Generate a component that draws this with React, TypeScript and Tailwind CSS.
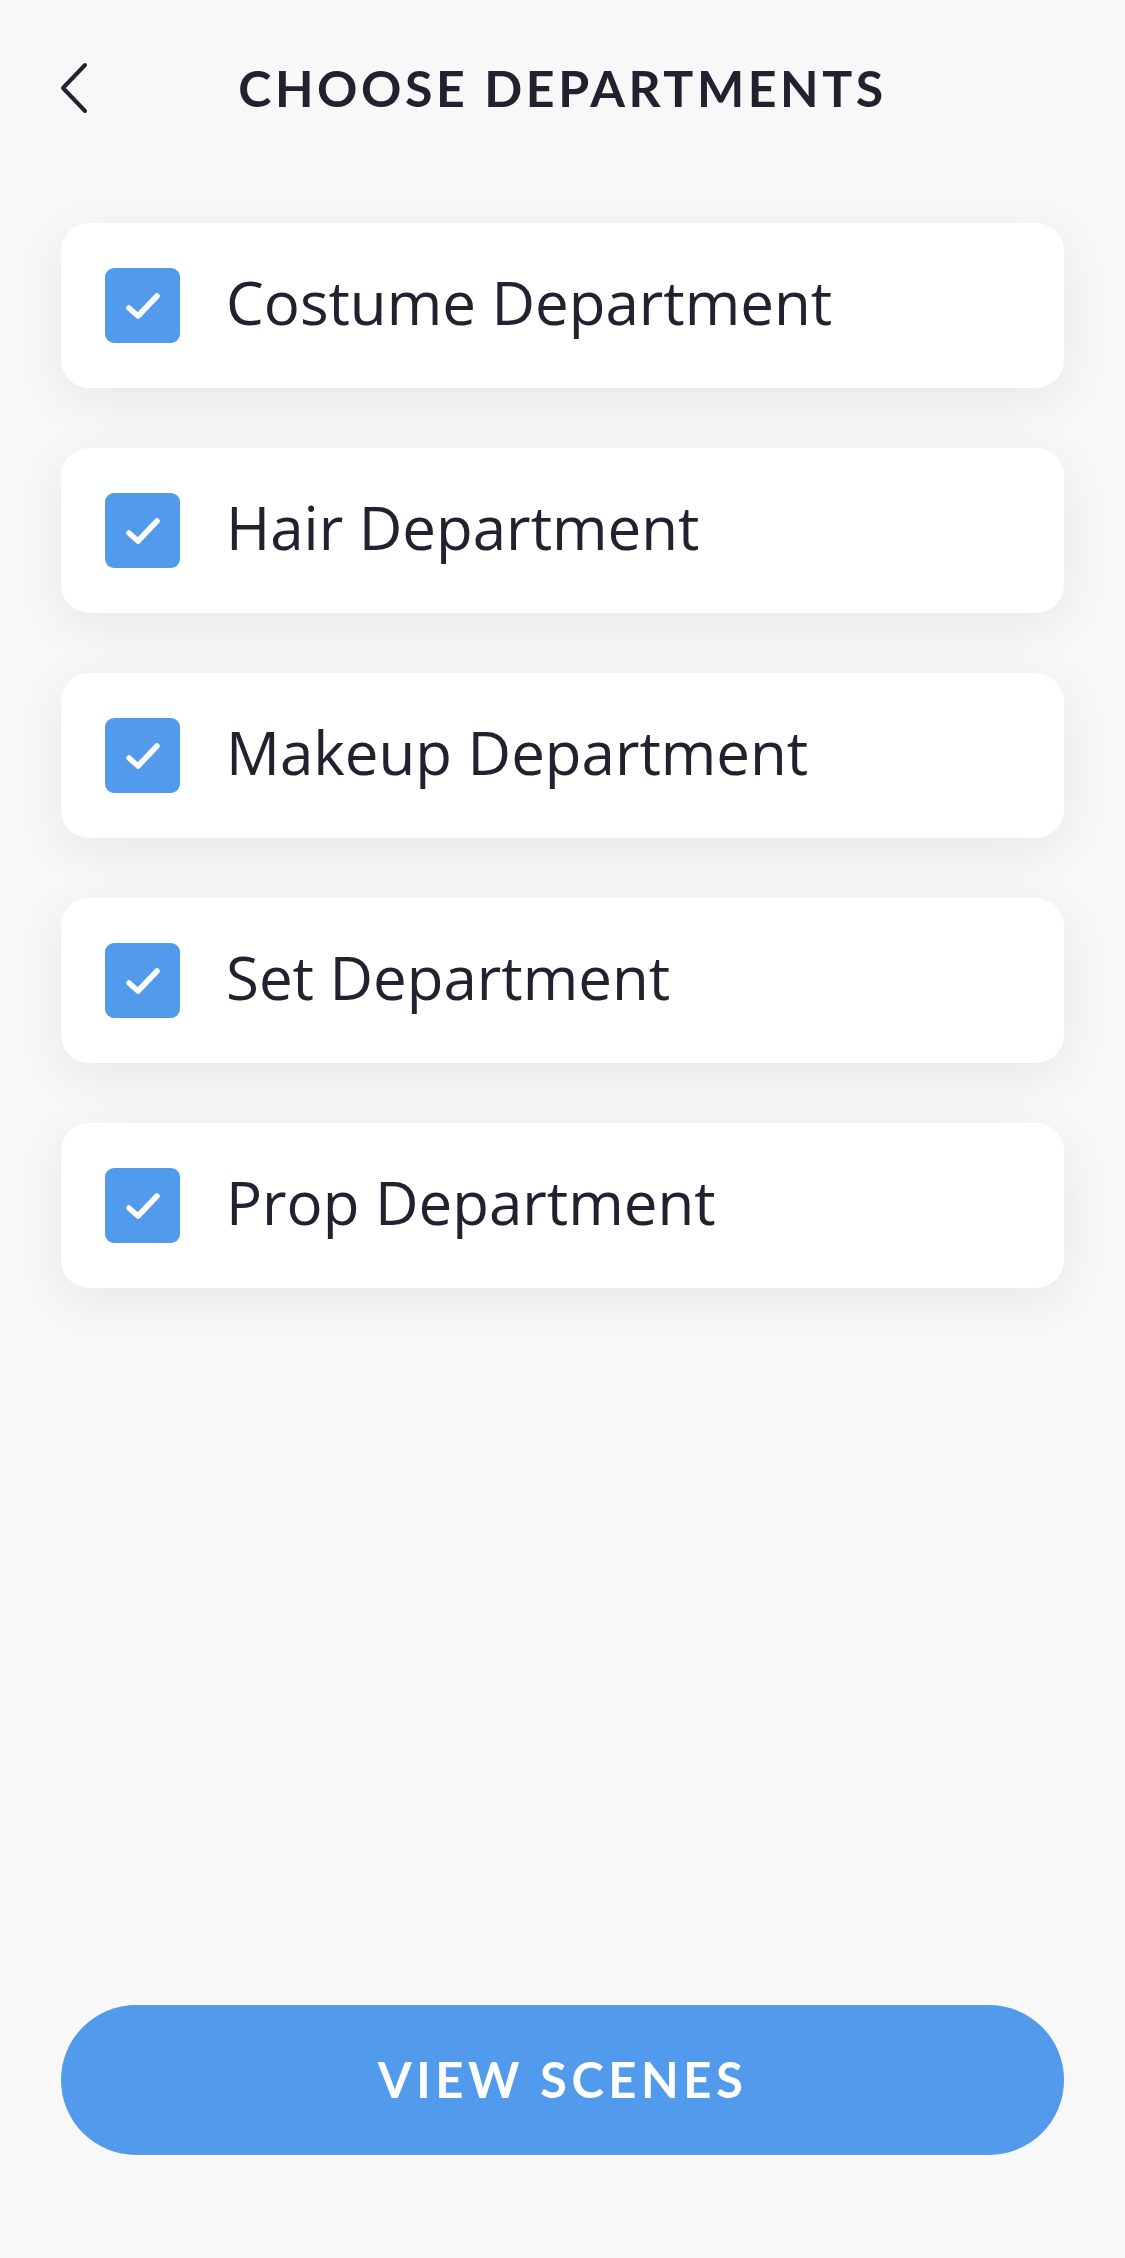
const departments = [
  "Costume Department",
  "Hair Department",
  "Makeup Department",
  "Set Department",
  "Prop Department",
]

function CheckBox() {
  return (
    <div className="w-[75px] h-[75px] rounded-[9px] bg-[#529AEC] flex items-center justify-center shrink-0">
      <svg width="36" height="28" viewBox="0 0 36 28" fill="none">
        <path d="M4 16 L13 24 L32 4" stroke="white" strokeWidth="5.5" strokeLinecap="round" strokeLinejoin="round" />
      </svg>
    </div>
  )
}

export default function App() {
  return (
    <div className="h-[2258px] bg-[#f8f8f8] flex flex-col">
      <div className="h-[176px] relative flex items-center justify-center">
        <button className="absolute left-[58px] top-[62px]">
          <svg width="32" height="52" viewBox="0 0 32 52" fill="none">
            <path d="M27 3 L5 26 L27 49" stroke="#23212f" strokeWidth="4" strokeLinecap="round" strokeLinejoin="round" />
          </svg>
        </button>
        <h1 className="text-[50px] font-bold tracking-[3.6px] text-[#23212f] font-['Lato',sans-serif]">
          CHOOSE DEPARTMENTS
        </h1>
      </div>

      <div className="px-[61px] pt-[47px] flex flex-col gap-[60px]">
        {departments.map((d) => (
          <div
            key={d}
            className="h-[165px] bg-white rounded-[28px] shadow-[0_12px_50px_rgba(0,0,0,0.07)] flex items-center pl-[44px] gap-[46px]"
          >
            <CheckBox />
            <span className="pb-[8px] text-[60px] text-[#23212f] font-['Open_Sans',sans-serif]">{d}</span>
          </div>
        ))}
      </div>

      <div className="mt-auto px-[61px] pb-[103px]">
        <button className="w-full h-[150px] rounded-full bg-[#529AEC] text-white text-[49px] font-bold tracking-[4.5px] font-['Lato',sans-serif]">
          VIEW SCENES
        </button>
      </div>
    </div>
  )
}
